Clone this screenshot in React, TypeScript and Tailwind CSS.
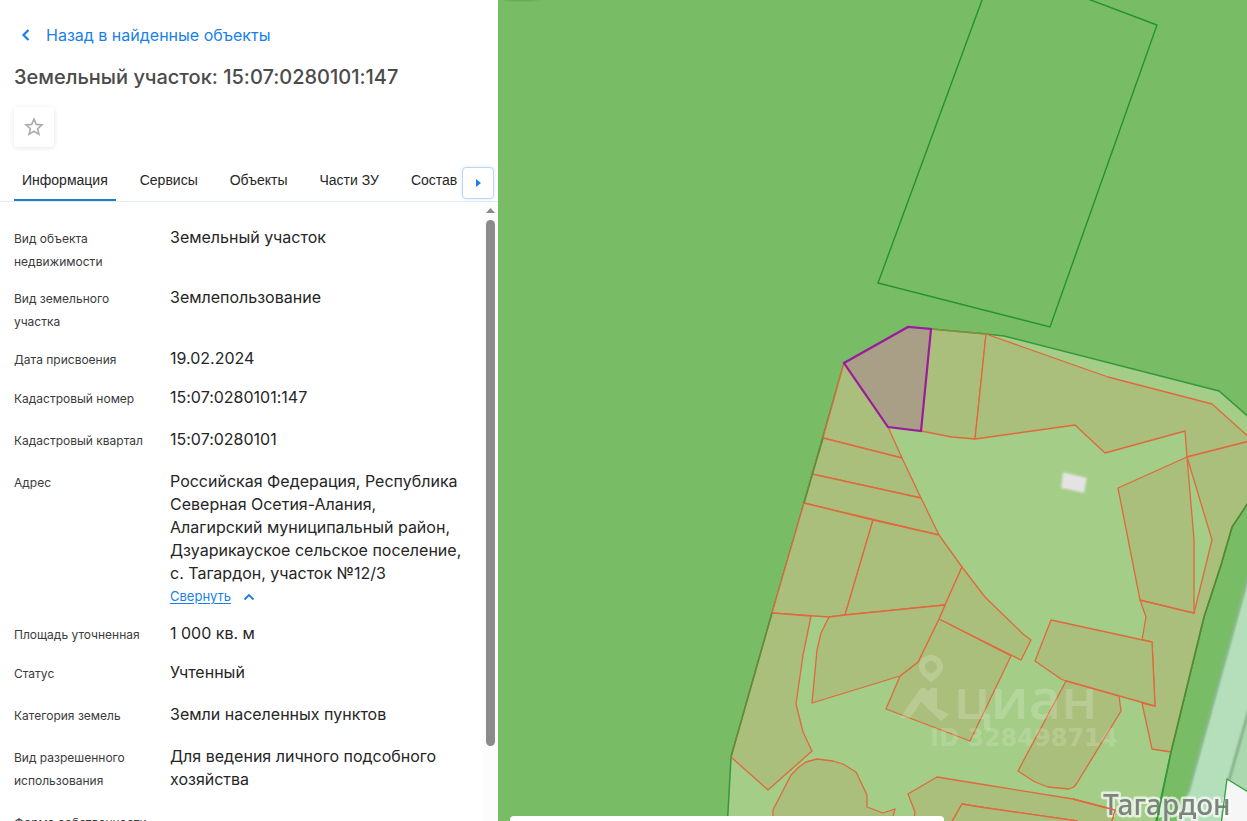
import React, { useState } from "react";

type Field = { label: string; value: string; gap: string; collapsible?: boolean };

const fields: Field[] = [
  { label: "Вид объекта недвижимости", value: "Земельный участок", gap: "pb-[13px]" },
  { label: "Вид земельного участка", value: "Землепользование", gap: "pb-[14px]" },
  { label: "Дата присвоения", value: "19.02.2024", gap: "pb-[15px]" },
  { label: "Кадастровый номер", value: "15:07:0280101:147", gap: "pb-[18px]" },
  { label: "Кадастровый квартал", value: "15:07:0280101", gap: "pb-[18px]" },
  {
    label: "Адрес",
    value:
      "Российская Федерация, Республика Северная Осетия-Алания, Алагирский муниципальный район, Дзуарикауское сельское поселение, с. Тагардон, участок №12/3",
    gap: "pb-[14px]",
    collapsible: true,
  },
  { label: "Площадь уточненная", value: "1 000 кв. м", gap: "pb-[15px]" },
  { label: "Статус", value: "Учтенный", gap: "pb-[18px]" },
  { label: "Категория земель", value: "Земли населенных пунктов", gap: "pb-[18px]" },
  { label: "Вид разрешенного использования", value: "Для ведения личного подсобного хозяйства", gap: "pb-[18px]" },
  { label: "Форма собственности", value: "", gap: "pb-[18px]" },
];

const tabs = ["Информация", "Сервисы", "Объекты", "Части ЗУ", "Состав"];

const parcels = [
  "844,363 823,438 902,458 888,427",
  "823,438 812,474 921,498 902,458",
  "812,474 804,503 939,535 921,498",
  "804,503 772,613 829,617 845,615 873,520",
  "873,520 939,535 962,567 945,605 845,615",
  "931,329 986,334 975,439 952,437 921,431",
  "986,334 1108,377 1212,404 1250,438 1250,441 1187,457 1185,431 1105,453 1075,425 975,439",
  "1187,457 1250,441 1250,500 1232,527 1221,565 1204,617 1171,752 1152,749 1142,703 1155,706 1152,642 1142,640 1146,617 1140,600 1194,613 1212,540",
  "1118,488 1187,457 1194,540 1194,613 1140,600",
  "1051,620 1152,642 1155,706 1066,681 1061,679 1035,661",
  "1066,681 1119,696 1121,711 1077,783 1074,787 1069,789 1048,787 1035,782 1018,771",
  "962,567 985,597 1023,634 1031,640 1021,660 939,619 945,605",
  "939,619 1011,656 970,741 886,709 900,676 918,662",
  "829,617 821,633 817,650 812,703 900,676 918,662 939,619 945,605 845,615",
  "772,613 811,616 803,655 796,704 803,732 812,751 768,790 731,757",
  "773,825 773,810 791,775 799,767 806,762 817,759 833,761 843,764 856,772 867,795 867,807 883,813 895,809 891,825",
  "937,777 908,794 915,812 913,825 950,825 962,804 980,807 1077,821 1085,825 1111,825 1115,810 1073,799 980,784",
  "962,804 980,807 1077,821 1085,825 950,825",
];

function ParcelMap() {
  return (
    <svg
      className="h-full w-full"
      viewBox="498 0 749 821"
      preserveAspectRatio="xMinYMin slice"
      role="img"
      aria-label="Карта участков"
    >
      <defs>
        <filter id="soft" x="-20%" y="-20%" width="140%" height="140%">
          <feGaussianBlur stdDeviation="0.9" />
        </filter>
        <filter id="label" x="-5%" y="-20%" width="110%" height="140%">
          <feGaussianBlur stdDeviation="0.7" />
        </filter>
      </defs>
      <rect x="498" y="0" width="749" height="821" fill="#78bd66" />
      <ellipse cx="521" cy="-1" rx="19" ry="2" fill="#5fa552" filter="url(#soft)" />

      <polygon points="1250,570 1188,793 1180,825 1250,825" fill="#b5dfba" filter="url(#soft)" />
      <polygon points="1250,706 1229,780 1250,792" fill="#abd8af" />
      <polyline points="1250,570 1188,793" fill="none" stroke="#7fae84" strokeWidth="2" filter="url(#soft)" />
      <polyline points="1250,706 1229,780" fill="none" stroke="#75a079" strokeWidth="2" filter="url(#soft)" />
      <polygon points="1227,779 1250,793 1250,830 1221,830" fill="#f5f6f5" />

      <polygon
        points="844,363 908,327 931,329 986,334 1004,336 1219,391 1250,418 1250,500 1232,527 1221,565 1204,617 1171,752 1154,830 727,830 731,757 772,613 804,503"
        fill="#a4cd87"
        stroke="#35983a"
        strokeWidth="1.5"
      />
      <polygon points="982,0 983,-4 1080,-4 1157,25 1050,327 878,283" fill="none" stroke="#249329" strokeWidth="1.4" />

      {parcels.map((points) => (
        <polygon key={points} points={points} fill="#abbf7c" stroke="#e0683d" strokeWidth="1.3" strokeLinejoin="round" />
      ))}
      <polyline points="823,438 804,503" fill="none" stroke="#55903a" strokeWidth="1.5" />
      <polyline points="772,613 731,757" fill="none" stroke="#55903a" strokeWidth="1.5" />
      <polyline points="931,329 986,334" fill="none" stroke="#6a9a3f" strokeWidth="1.5" />
      <polyline points="1250,500 1232,527 1221,565 1204,617 1171,752" fill="none" stroke="#468f35" strokeWidth="1.6" />

      <polygon points="1063,472 1087,478 1084,493 1061,488" fill="#dfe2da" filter="url(#soft)" />
      <polygon points="1065,474 1085,479 1083,491 1063,487" fill="#e3e3e3" />

      <polygon points="844,363 908,327 931,329 921,431 888,427" fill="#a99f87" stroke="#9b1b9e" strokeWidth="2.2" />

      <g fill="#ffffff" fillOpacity="0.18">
        <path
          fillRule="evenodd"
          d="M931 655a12 12 0 0 1 12 12c0 6-6 11-12 15-6-4-12-9-12-15a12 12 0 0 1 12-12zm0 6a6 6 0 1 0 0 12 6 6 0 0 0 0-12z"
        />
        <path d="M900 718l21-30h4l3 3 3-3h6v20l12 6-8 7-20-19-11 16z" />
        <text x="954" y="719" fontFamily="Open Sans, sans-serif" fontSize="56" fontWeight="600">
          циан
        </text>
        <text x="930" y="746" fontFamily="DejaVu Sans, sans-serif" fontSize="24" fontWeight="700">
          ID 328498714
        </text>
      </g>

      <text
        x="1103"
        y="815"
        fontFamily="Noto Sans, sans-serif"
        fontSize="28"
        fontWeight="500"
        fill="#7b857d"
        stroke="#ffffff"
        strokeOpacity="0.7"
        strokeWidth="5"
        strokeLinejoin="round"
        paintOrder="stroke"
        filter="url(#label)"
      >
        Тагардон
      </text>
      <polyline points="1250,793 1227,779 1221,825" fill="none" stroke="#31a03a" strokeWidth="1.3" />
      <polyline points="1171,752 1156,825" fill="none" stroke="#35983a" strokeWidth="1.5" />
      <polyline points="1073,799 1115,810 1111,825" fill="none" stroke="#e0683d" strokeWidth="1.3" />
    </svg>
  );
}

function Scrollbar() {
  return (
    <div className="flex w-[15px] shrink-0 flex-col items-center bg-[#fcfcfc] pt-[6px]" aria-hidden="true">
      <svg className="h-[5px] w-[9px]" viewBox="0 0 9 5">
        <path d="M0 5L4.5 0 9 5z" fill="#8a8a8a" />
      </svg>
      <div className="mt-[7px] h-[526px] w-[9px] rounded-full bg-[#8b8b8b]" />
    </div>
  );
}

export default function App() {
  const [active, setActive] = useState(0);
  const [open, setOpen] = useState(true);

  return (
    <div className="flex h-screen overflow-hidden bg-white font-['Inter',sans-serif] text-[#262626] [font-feature-settings:'calt'_0]">
      <aside className="flex w-[498px] shrink-0 flex-col bg-white">
        <header className="px-[14px] pt-[23px]">
          <a href="#results" className="flex items-center gap-3 pl-1 text-[16px] leading-6 text-[#1a7feb]">
            <svg className="h-4 w-4" viewBox="0 0 16 16" fill="none" stroke="currentColor" strokeWidth="2.2">
              <path d="M10.500 3L5.500 8l5 5" />
            </svg>
            Назад в найденные объекты
          </a>
          <h1 className="mt-[18px] text-[20px] font-medium leading-6 text-[#4b4b4b]">
            Земельный участок: 15:07:0280101:147
          </h1>
          <button
            type="button"
            aria-label="В избранное"
            className="mt-[18px] flex h-10 w-10 items-center justify-center rounded bg-white shadow-[0_1px_5px_rgba(0,0,0,0.1)]"
          >
            <svg className="h-5 w-5" viewBox="0 0 20 20" fill="none" stroke="#adadad" strokeWidth="1.6">
              <path d="M10 2l2.200 5.400 5.800.5-4.400 3.800 1.400 5.700-5-3.100-5 3.100 1.400-5.700L2 7.900l5.800-.5z" />
            </svg>
          </button>
        </header>

        <nav className="mt-5 flex h-[35px] shrink-0 items-start justify-between border-b border-[#e3ebf2] pl-[14px] pr-1">
          <div className="flex min-w-0 flex-1 gap-4 font-['Liberation_Sans',sans-serif]" role="tablist">
            {tabs.map((tab, i) => (
              <button
                key={tab}
                type="button"
                role="tab"
                aria-selected={active === i}
                onClick={() => setActive(i)}
                className={
                  active === i
                    ? "h-[34px] shrink-0 whitespace-nowrap border-b-2 border-[#1f7fc9] px-2 pb-1.5 text-[14px] leading-5"
                    : "h-[34px] shrink-0 whitespace-nowrap border-b-2 border-transparent px-2 pb-1.5 text-[14px] leading-5"
                }
              >
                {tab}
              </button>
            ))}
          </div>
          <button
            type="button"
            aria-label="Следующие вкладки"
            className="relative flex h-8 w-8 shrink-0 items-center justify-center rounded border border-[#bcd6f2] bg-white shadow-[0_0_4px_rgba(31,127,229,0.15)]"
          >
            <svg className="h-2 w-[5px]" viewBox="0 0 5 8">
              <path d="M0 0l5 4-5 4z" fill="#1a7feb" />
            </svg>
          </button>
        </nav>

        <div className="flex min-h-0 flex-1">
          <dl className="min-w-0 flex-1 overflow-hidden pl-[14px] pt-6">
            {fields.map((f) => (
              <div key={f.label} className={"flex " + f.gap}>
                <dt className="w-[136px] shrink-0 pt-px text-[12px] leading-[23px] text-[#3b3b3b]">{f.label}</dt>
                <dd className="min-w-0 flex-1 pl-5 pr-4 text-[16px] leading-[23px]">
                  {f.value}
                  {f.collapsible && (
                    <button
                      type="button"
                      onClick={() => setOpen(!open)}
                      className="flex h-[23px] items-center gap-3 text-[13px] text-[#1a7feb]"
                    >
                      <span className="underline underline-offset-2">Свернуть</span>
                      <svg className="h-3 w-3" viewBox="0 0 12 12" fill="none" stroke="currentColor" strokeWidth="1.8">
                        <path d="M1.500 8.500L6 4l4.500 4.500" />
                      </svg>
                    </button>
                  )}
                </dd>
              </div>
            ))}
          </dl>
          <Scrollbar />
        </div>
      </aside>

      <main className="relative min-w-0 flex-1 overflow-hidden bg-[#78bd66]">
        <ParcelMap />
        <div className="absolute bottom-0 left-3 h-[5px] w-[434px] rounded-t bg-white" />
      </main>
    </div>
  );
}
